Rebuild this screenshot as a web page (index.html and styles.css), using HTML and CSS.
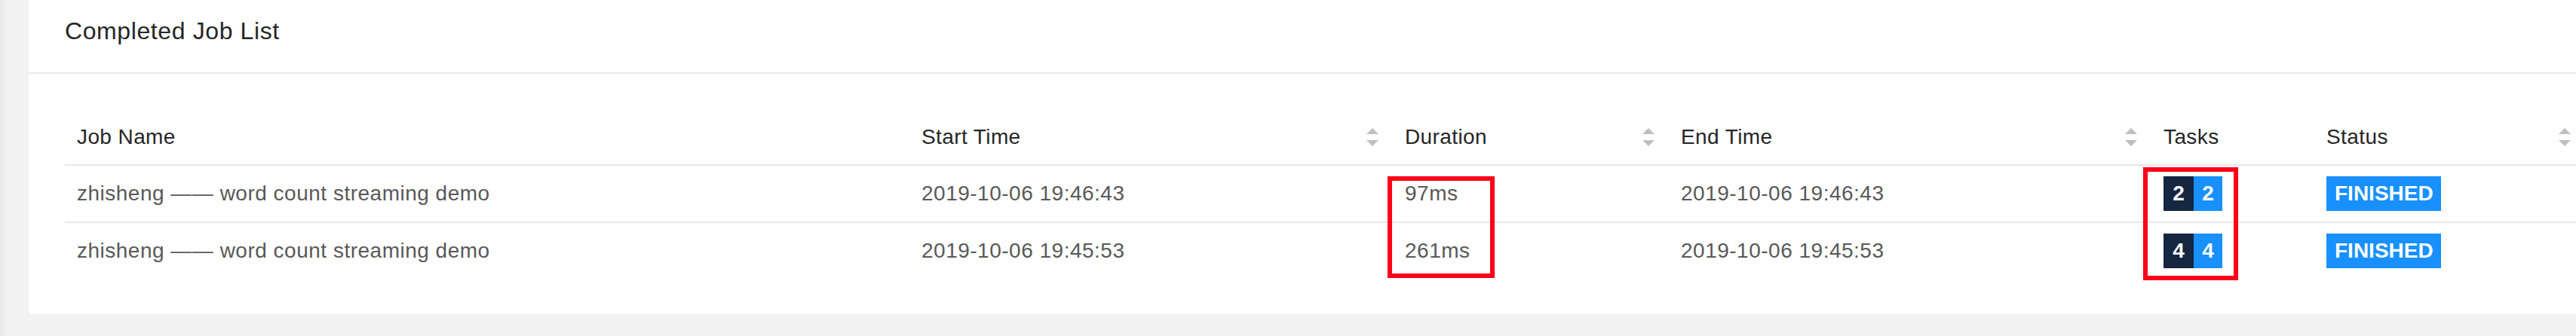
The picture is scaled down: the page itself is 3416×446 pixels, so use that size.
FILE: index.html
```html
<!DOCTYPE html>
<html lang="en">
<head>
<meta charset="utf-8">
<title>Completed Job List</title>
<link rel="stylesheet" href="styles.css">
</head>
<body>
<div class="page">
  <div class="card">
    <div class="card-head">Completed Job List</div>
    <div class="card-body">
      <div class="table-wrap">
        <table class="jobs">
          <colgroup>
            <col class="c-name"><col class="c-start"><col class="c-dur"><col class="c-end"><col class="c-tasks"><col class="c-status">
          </colgroup>
          <thead>
            <tr>
              <th>Job Name</th>
              <th><div class="th-sort"><span>Start Time</span><svg class="sorter" viewBox="0 0 16 24" width="16" height="24"><polygon points="8,0 16,8 0,8"/><polygon points="0,16 16,16 8,24"/></svg></div></th>
              <th><div class="th-sort"><span>Duration</span><svg class="sorter" viewBox="0 0 16 24" width="16" height="24"><polygon points="8,0 16,8 0,8"/><polygon points="0,16 16,16 8,24"/></svg></div></th>
              <th><div class="th-sort"><span>End Time</span><svg class="sorter" viewBox="0 0 16 24" width="16" height="24"><polygon points="8,0 16,8 0,8"/><polygon points="0,16 16,16 8,24"/></svg></div></th>
              <th>Tasks</th>
              <th><div class="th-sort"><span>Status</span><svg class="sorter" viewBox="0 0 16 24" width="16" height="24"><polygon points="8,0 16,8 0,8"/><polygon points="0,16 16,16 8,24"/></svg></div></th>
            </tr>
          </thead>
          <tbody>
            <tr>
              <td>zhisheng —— word count streaming demo</td>
              <td>2019-10-06 19:46:43</td>
              <td>97ms</td>
              <td>2019-10-06 19:46:43</td>
              <td><div class="tasks"><span class="cnt cnt-dark">2</span><span class="cnt cnt-blue">2</span></div></td>
              <td><div class="status-cell"><span class="tag">FINISHED</span></div></td>
            </tr>
            <tr>
              <td>zhisheng —— word count streaming demo</td>
              <td>2019-10-06 19:45:53</td>
              <td>261ms</td>
              <td>2019-10-06 19:45:53</td>
              <td><div class="tasks"><span class="cnt cnt-dark">4</span><span class="cnt cnt-blue">4</span></div></td>
              <td><div class="status-cell"><span class="tag">FINISHED</span></div></td>
            </tr>
          </tbody>
        </table>
        <div class="mark mark-duration"></div>
        <div class="mark mark-tasks"></div>
      </div>
    </div>
  </div>
</div>
</body>
</html>
```

FILE: styles.css
```css
html, body {
  margin: 0;
  padding: 0;
}
body {
  width: 3416px;
  height: 446px;
  overflow: hidden;
  background: linear-gradient(to right, #e9e9e9 0, #f2f2f2 9px) #f2f2f2;
  font-family: "Liberation Sans", Arial, sans-serif;
}
.page {
  padding-left: 38px;
}
.card {
  width: 3438px;
  background: #fff;
  border-radius: 0 0 4px 4px;
}
.card-head {
  padding: 17px 48px 31px;
  font-size: 32px;
  line-height: 48px;
  color: #262626;
  font-weight: 500;
  letter-spacing: 0.6px;
  border-bottom: 2px solid #e8e8e8;
}
.card-body {
  padding: 47px 48px 47px;
}
.table-wrap {
  position: relative;
}
.jobs {
  width: 3342px;
  table-layout: fixed;
  border-collapse: collapse;
  border-spacing: 0;
}
.c-name { width: 1120px; }
.c-start { width: 641px; }
.c-dur { width: 366px; }
.c-end { width: 640px; }
.c-tasks { width: 216px; }
.c-status { width: 359px; }
.jobs th {
  padding: 16px 16px 15px;
  font-size: 28px;
  line-height: 42px;
  font-weight: 500;
  color: #262626;
  text-align: left;
  letter-spacing: 0.4px;
  border-bottom: 2px solid #e8e8e8;
  white-space: nowrap;
}
.th-sort {
  display: flex;
  align-items: center;
  justify-content: space-between;
}
.sorter {
  display: block;
  fill: #bfbfbf;
  margin-right: 3px;
}
.jobs td {
  padding: 16px;
  font-size: 28px;
  line-height: 42px;
  color: #595959;
  letter-spacing: 0.5px;
  border-bottom: 2px solid #e8e8e8;
  white-space: nowrap;
}
.jobs tbody tr:last-child td {
  border-bottom: none;
}
.tasks,
.status-cell {
  display: flex;
  align-items: center;
  height: 42px;
}
.cnt {
  display: flex;
  align-items: center;
  justify-content: center;
  height: 46px;
  margin: -2px 0;
  color: #fff;
  font-weight: 700;
  font-size: 28px;
  letter-spacing: 0;
}
.cnt-dark {
  width: 40px;
  background: #142640;
}
.cnt-blue {
  width: 38px;
  background: #1890ff;
}
.tag {
  display: inline-flex;
  align-items: center;
  height: 46px;
  margin: -2px 0;
  padding: 0 10px 0 11px;
  background: #1890ff;
  color: #fff;
  font-weight: 700;
  font-size: 28px;
  letter-spacing: 0;
}
.mark {
  position: absolute;
  border: 6px solid #ff0019;
  box-sizing: border-box;
}
.mark-duration {
  left: 1754px;
  top: 89px;
  width: 142px;
  height: 135px;
}
.mark-tasks {
  left: 2756px;
  top: 77px;
  width: 126px;
  height: 150px;
}
```
